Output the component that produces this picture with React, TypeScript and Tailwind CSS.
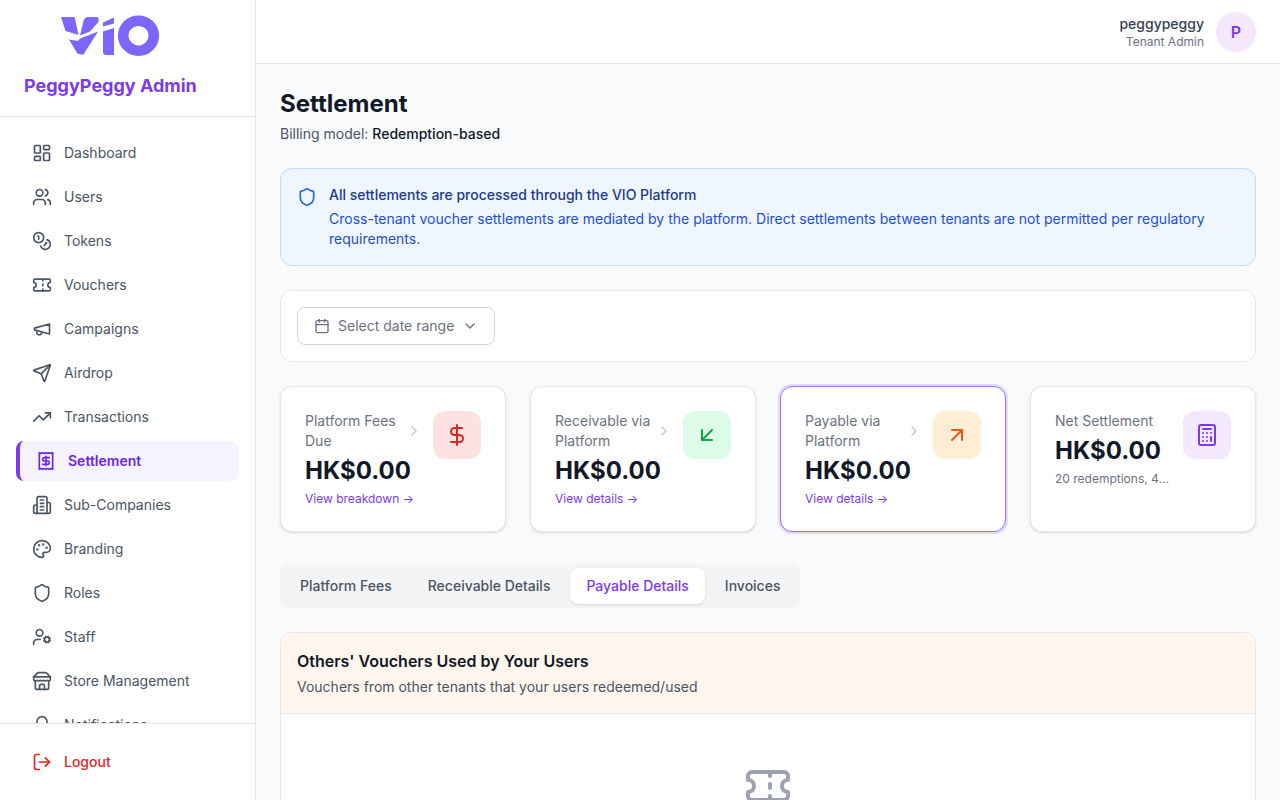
import {
  LayoutDashboard,
  Users,
  Coins,
  Ticket,
  Send,
  TrendingUp,
  Receipt,
  Palette,
  Shield,
  UserCog,
  Bell,
  LogOut,
  ChevronRight,
  ChevronDown,
  Calendar,
  DollarSign,
  ArrowDownLeft,
  ArrowUpRight,
  Calculator,
} from "lucide-react";

type IconProps = { className?: string };

function MegaphoneIcon({ className }: IconProps) {
  return (
    <svg viewBox="0 0 24 24" fill="none" stroke="currentColor" strokeWidth="2" strokeLinecap="round" strokeLinejoin="round" className={className}>
      <path d="m3 11 18-5v12L3 13v-2z" />
      <path d="M11.600 16.800a3 3 0 1 1-5.800-1.600" />
    </svg>
  );
}

function BuildingIcon({ className }: IconProps) {
  return (
    <svg viewBox="0 0 24 24" fill="none" stroke="currentColor" strokeWidth="2" strokeLinecap="round" strokeLinejoin="round" className={className}>
      <path d="M6 22V4a2 2 0 0 1 2-2h8a2 2 0 0 1 2 2v18Z" />
      <path d="M6 12H4a2 2 0 0 0-2 2v6a2 2 0 0 0 2 2h2" />
      <path d="M18 9h2a2 2 0 0 1 2 2v9a2 2 0 0 1-2 2h-2" />
      <path d="M10 6h4" />
      <path d="M10 10h4" />
      <path d="M10 14h4" />
      <path d="M10 18h4" />
    </svg>
  );
}

function StoreIcon({ className }: IconProps) {
  return (
    <svg viewBox="0 0 24 24" fill="none" stroke="currentColor" strokeWidth="2" strokeLinecap="round" strokeLinejoin="round" className={className}>
      <path d="m2 7 4.410-4.410A2 2 0 0 1 7.830 2h8.340a2 2 0 0 1 1.420.590L22 7" />
      <path d="M4 12v8a2 2 0 0 0 2 2h12a2 2 0 0 0 2-2v-8" />
      <path d="M15 22v-4a2 2 0 0 0-2-2h-2a2 2 0 0 0-2 2v4" />
      <path d="M2 7h20" />
      <path d="M22 7v3a2 2 0 0 1-2 2a2.700 2.700 0 0 1-1.590-.630.700.700 0 0 0-.820 0A2.700 2.700 0 0 1 16 12a2.700 2.700 0 0 1-1.590-.630.700.700 0 0 0-.820 0A2.700 2.700 0 0 1 12 12a2.700 2.700 0 0 1-1.590-.630.700.700 0 0 0-.820 0A2.700 2.700 0 0 1 8 12a2.700 2.700 0 0 1-1.590-.630.700.700 0 0 0-.820 0A2.700 2.700 0 0 1 4 12a2 2 0 0 1-2-2V7" />
    </svg>
  );
}

const navItems = [
  { label: "Dashboard", icon: LayoutDashboard },
  { label: "Users", icon: Users },
  { label: "Tokens", icon: Coins },
  { label: "Vouchers", icon: Ticket },
  { label: "Campaigns", icon: MegaphoneIcon },
  { label: "Airdrop", icon: Send },
  { label: "Transactions", icon: TrendingUp },
  { label: "Settlement", icon: Receipt, active: true },
  { label: "Sub-Companies", icon: BuildingIcon },
  { label: "Branding", icon: Palette },
  { label: "Roles", icon: Shield },
  { label: "Staff", icon: UserCog },
  { label: "Store Management", icon: StoreIcon },
  { label: "Notifications", icon: Bell },
];

const tabs = ["Platform Fees", "Receivable Details", "Payable Details", "Invoices"];

function VioLogo() {
  return (
    <svg viewBox="0 0 100 41" className="w-[100px] h-[41px]" fill="#7c66ff">
      <path d="M1 2h12.500a1.500 1.500 0 0 1 1.500 1.300L18.500 20 5.500 16Z" />
      <path d="M27 2h10a1.500 1.500 0 0 1 1.500 1.500V6a3 3 0 0 1-.5 1.500L30 16.500 20 20.500 23 8a8 8 0 0 1 4-6Z" />
      <path d="M9 24.500l9 1.500 2-2.500L38 16.500 25 37a3 3 0 0 1-5 2 3 3 0 0 1-3-1Z" />
      <path d="M43 7.500 54 2.500V8.500L43 11.500Z" />
      <path d="M43 16.500 54 13V40H46a3 3 0 0 1-3-3Z" />
      <ellipse cx="78.500" cy="20.700" rx="15.300" ry="15" fill="none" stroke="#7c66ff" strokeWidth="10.500" />
    </svg>
  );
}

function Sidebar() {
  return (
    <aside className="w-64 h-full shrink-0 flex flex-col bg-white border-r border-[#e5e7eb]">
      <div className="px-6 pt-[15px] pb-4 border-b border-[#e5e7eb]">
        <div className="w-fit flex flex-col items-center gap-4">
          <VioLogo />
          <h1 className="text-lg font-bold leading-7 text-[#7c3aed]">PeggyPeggy Admin</h1>
        </div>
      </div>

      <nav className="flex-1 min-h-0 overflow-hidden p-4 flex flex-col gap-1">
        {navItems.map((item) => {
          const Icon = item.icon;
          return (
            <div
              key={item.label}
              className={
                item.active
                  ? "h-10 shrink-0 flex items-center gap-3 px-4 rounded-lg border-l-4 border-[#7c3aed] bg-[#f5f3ff] text-[#6d28d9] text-sm font-semibold"
                  : "h-10 shrink-0 flex items-center gap-3 px-4 rounded-lg text-[#4b5563] text-sm"
              }
            >
              <Icon className="w-5 h-5 shrink-0" />
              <span>{item.label}</span>
            </div>
          );
        })}
      </nav>

      <div className="h-[77px] shrink-0 px-4 flex items-center border-t border-[#e5e7eb]">
        <div className="w-full h-10 flex items-center gap-3 px-4 text-[#dc2626] text-sm font-medium">
          <LogOut className="w-5 h-5 shrink-0" />
          <span>Logout</span>
        </div>
      </div>
    </aside>
  );
}

function StatCard({
  title,
  value,
  link,
  note,
  icon: Icon,
  boxClass,
  highlighted,
}: {
  title: string;
  value: string;
  link?: string;
  note?: string;
  icon: typeof DollarSign;
  boxClass: string;
  highlighted?: boolean;
}) {
  return (
    <div
      className={
        highlighted
          ? "bg-white rounded-xl border border-[#9b71f5] ring-2 ring-[#e3dafc] shadow-sm p-6 h-[146px]"
          : "bg-white rounded-xl border border-[#e5e7eb] shadow-sm p-6 h-[146px]"
      }
    >
      <div className="flex items-start justify-between gap-3">
        <div className="flex-1 min-w-0">
          <div className="flex items-center justify-between">
            <p className="text-sm text-[#6b7280]">{title}</p>
            {link && <ChevronRight className="w-4 h-4 shrink-0 -mr-px text-[#c0c4cc]" />}
          </div>
          <p className="mt-1 text-2xl font-bold text-[#111827]">{value}</p>
          {link && <p className="mt-1 text-xs text-[#7c3aed]">{link} →</p>}
          {note && <p className="mt-1 text-xs text-[#6b7280] truncate">{note}</p>}
        </div>
        <div className={`w-12 h-12 shrink-0 rounded-xl flex items-center justify-center ${boxClass}`}>
          <Icon className="w-6 h-6" />
        </div>
      </div>
    </div>
  );
}

export default function App() {
  return (
    <div className="h-screen flex overflow-hidden bg-[#f9fafb] font-['Inter',sans-serif]">
      <Sidebar />
      <div className="flex-1 min-w-0 h-full flex flex-col">
        <header className="h-16 shrink-0 px-6 flex items-center justify-end gap-3 bg-white border-b border-[#e5e7eb]">
          <div className="text-right">
            <p className="text-sm font-medium text-[#374151]">peggypeggy</p>
            <p className="text-xs text-[#6b7280]">Tenant Admin</p>
          </div>
          <div className="w-10 h-10 rounded-full bg-[#f3e8ff] flex items-center justify-center text-[#7c3aed] font-semibold">
            P
          </div>
        </header>

        <main className="flex-1 min-h-0 overflow-hidden p-6">
          <h2 className="text-2xl font-bold text-[#111827]">Settlement</h2>
          <p className="mt-1 text-sm text-[#4b5563]">
            Billing model: <span className="font-medium text-[#111827]">Redemption-based</span>
          </p>

          <div className="mt-6 flex gap-3 p-4 rounded-xl border border-[#bfdbfe] bg-[#eff6ff]">
            <Shield className="w-5 h-5 mt-0.5 shrink-0 text-[#2563eb]" />
            <div>
              <p className="text-sm font-medium text-[#1e3a8a]">All settlements are processed through the VIO Platform</p>
              <p className="mt-1 text-sm text-[#1d4ed8]">
                Cross-tenant voucher settlements are mediated by the platform. Direct settlements between tenants are not
                permitted per regulatory requirements.
              </p>
            </div>
          </div>

          <div className="mt-6 p-4 bg-white rounded-xl border border-[#e5e7eb]">
            <button className="h-[38px] px-4 flex items-center gap-2 rounded-lg border border-[#d1d5db] text-sm text-[#6b7280]">
              <Calendar className="w-4 h-4" />
              <span>Select date range</span>
              <ChevronDown className="w-4 h-4" />
            </button>
          </div>

          <div className="mt-6 grid grid-cols-4 gap-6">
            <StatCard
              title="Platform Fees Due"
              value="HK$0.00"
              link="View breakdown"
              icon={DollarSign}
              boxClass="bg-[#fee2e2] text-[#dc2626]"
            />
            <StatCard
              title="Receivable via Platform"
              value="HK$0.00"
              link="View details"
              icon={ArrowDownLeft}
              boxClass="bg-[#dcfce7] text-[#16a34a]"
            />
            <StatCard
              title="Payable via Platform"
              value="HK$0.00"
              link="View details"
              icon={ArrowUpRight}
              boxClass="bg-[#ffedd5] text-[#ea580c]"
              highlighted
            />
            <StatCard
              title="Net Settlement"
              value="HK$0.00"
              note="20 redemptions, 4 vouchers"
              icon={Calculator}
              boxClass="bg-[#f3e8ff] text-[#7c3aed]"
            />
          </div>

          <div className="mt-8 w-fit flex gap-1 p-1 rounded-lg bg-[#f3f4f6]">
            {tabs.map((tab) => (
              <div
                key={tab}
                className={
                  tab === "Payable Details"
                    ? "h-9 px-4 flex items-center rounded-lg bg-white shadow-sm text-sm font-medium text-[#7c3aed]"
                    : "h-9 px-4 flex items-center rounded-lg text-sm font-medium text-[#4b5563]"
                }
              >
                {tab}
              </div>
            ))}
          </div>

          <div className="mt-6 bg-white rounded-xl border border-[#e5e7eb] overflow-hidden">
            <div className="p-4 bg-[#fff7ed] border-b border-[#e5e7eb]">
              <h3 className="font-semibold text-[#111827]">Others' Vouchers Used by Your Users</h3>
              <p className="mt-1 text-sm text-[#4b5563]">Vouchers from other tenants that your users redeemed/used</p>
            </div>
            <div className="py-12 flex justify-center">
              <Ticket className="w-12 h-12 text-[#9ca3af]" />
            </div>
          </div>
        </main>
      </div>
    </div>
  );
}
